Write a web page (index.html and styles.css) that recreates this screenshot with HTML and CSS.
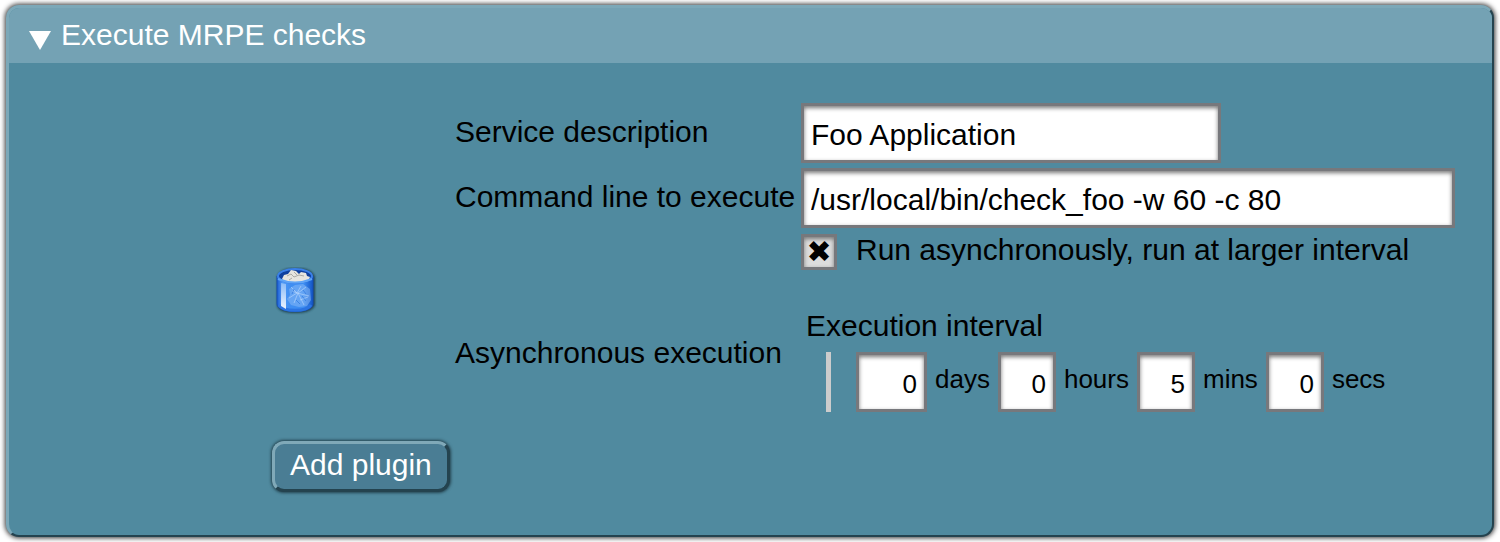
FILE: index.html
```html
<!DOCTYPE html>
<html lang="en">
<head>
<meta charset="utf-8">
<title>Execute MRPE checks</title>
<link rel="stylesheet" href="styles.css">
</head>
<body>
<form class="panel">
  <h2 class="panel-header">
    <svg class="caret" viewBox="0 0 22 19" aria-hidden="true"><path d="M0 0h22L11 19z" fill="#fff"/></svg>
    Execute MRPE checks
  </h2>
  <div class="panel-body">
    <div class="plugin">
      <button type="button" class="delete" aria-label="Delete plugin">
        <svg class="bin" viewBox="0 0 44 48" aria-hidden="true">
          <defs>
            <linearGradient id="side" x1="0" x2="1" y1="0" y2="0">
              <stop offset="0" stop-color="#1c5cd0"/>
              <stop offset=".15" stop-color="#4f9af5"/>
              <stop offset=".35" stop-color="#3f8ef2"/>
              <stop offset=".75" stop-color="#3d8df2"/>
              <stop offset="1" stop-color="#1253c4"/>
            </linearGradient>
            <linearGradient id="shine" x1="0" x2="0" y1="0" y2="1">
              <stop offset="0" stop-color="#fff" stop-opacity=".35"/>
              <stop offset="1" stop-color="#fff" stop-opacity=".9"/>
            </linearGradient>
            <filter id="shadow" x="-20%" y="-20%" width="140%" height="140%"><feGaussianBlur stdDeviation="1"/></filter>
            <filter id="soft" x="-20%" y="-20%" width="140%" height="140%"><feGaussianBlur stdDeviation=".6"/></filter>
          </defs>
          <path d="M3 10v28q1 8 18 8t20-8V10q-3-9-19-9T3 10z" fill="#16333f" opacity=".8" filter="url(#shadow)"/>
          <path d="M3 9v28c0 10 36 10 36 0V9z" fill="url(#side)" stroke="#1550b8"/>
          <path d="M5 38c4 7 28 7 32 0" fill="none" stroke="#2b74e2" stroke-width="3"/>
          <ellipse cx="21" cy="9" rx="17" ry="7" fill="#0e3f9e" stroke="#3a7fe8" stroke-width="2"/>
          <g filter="url(#soft)">
            <path d="M8 12l2-4 4-1 3-4 5 1 3 3 2-2 5 1 1 3 3 1-2 4q-12 4-24 0z" fill="#e6e4df"/>
            <path d="M13 9l4-2 3 3 5-2 5 1M20 5l3 3M15 13l3-2" fill="none" stroke="#aaa9a5"/>
          </g>
          <path d="M4 12q17 7 34 0" fill="none" stroke="#5ea4f6" stroke-width="2"/>
          <path d="M7 16l5 1v25l-5-3z" fill="url(#shine)" filter="url(#soft)"/>
          <g filter="url(#soft)">
            <path d="M15 22l6-4 8-1 7 5 1 11-4 6-8 1-8-2-4-6 3-4z" fill="#8cbcf5" opacity=".5"/>
            <path d="M17 20l6 6 4-7M15 31l8-5 12 3M24 26l-4 10M24 26l6 12M32 20l-8 6M26 33l8-3M18 24l5 2" fill="none" stroke="#c3deff" opacity=".55"/>
            <path d="M20 22l-2 5M29 23l3 4M22 33l4 4M28 29l4 5" fill="none" stroke="#2670d8" opacity=".6"/>
          </g>
        </svg>
      </button>
      <div class="fields">
        <label for="service">Service description</label>
        <input class="text service" id="service" type="text" value="Foo Application">
        <label for="command">Command line to execute</label>
        <input class="text command" id="command" type="text" value="/usr/local/bin/check_foo -w 60 -c 80">
        <span class="async-label">Asynchronous execution</span>
        <div class="async">
          <label class="toggle"><input class="check" type="checkbox" checked><span>Run asynchronously, run at larger interval</span></label>
          <div class="interval-title">Execution interval</div>
          <div class="interval">
            <input class="text number days" id="days" type="text" value="0"><label for="days">days</label>
            <input class="text number" id="hours" type="text" value="0"><label for="hours">hours</label>
            <input class="text number" id="mins" type="text" value="5"><label for="mins">mins</label>
            <input class="text number" id="secs" type="text" value="0"><label for="secs">secs</label>
          </div>
        </div>
      </div>
    </div>
    <button type="button" class="add">Add plugin</button>
  </div>
</form>
</body>
</html>
```
FILE: styles.css
```css
* { box-sizing: border-box; }

body {
  margin: 0;
  padding: 5px 6px;
  background: #fff;
  color: #000;
  font: 30px/34px "Liberation Sans", Arial, sans-serif;
}

input, button { font: inherit; }

.panel {
  overflow: hidden;
  border: solid;
  border-width: 3px 2px 2px 3px;
  border-color: #7ca8b8 #24434f #24434f #7ca8b8;
  border-radius: 13px;
  background: #508a9f;
  box-shadow: 0 0 5px 1px #333;
}

.panel-header {
  display: flex;
  align-items: center;
  gap: 10px;
  margin: 0;
  padding: 10px 20px 11px;
  background: #74a2b4;
  color: #fff;
  font-size: 30px;
  font-weight: normal;
}

.caret {
  width: 22px;
  height: 19px;
  margin-top: 10px;
}

.panel-body { padding: 40px 36px 43px 263px; }

.plugin {
  display: flex;
  align-items: center;
}

.delete {
  flex: none;
  width: 183px;
  margin-top: 66px;
  padding: 0 2px;
  border: 0;
  background: none;
  text-align: left;
}

.bin {
  display: block;
  width: 44px;
  height: 48px;
}

.fields {
  flex: 1;
  display: grid;
  grid-template-columns: 346px 1fr;
  row-gap: 5px;
  align-items: center;
}

.fields > label { padding-bottom: 2px; }

.text {
  min-width: 0;
  height: 60px;
  padding: 4px 7px 0;
  border: 3px solid #77787c;
  border-radius: 0;
  background: #fff;
  color: #000;
  box-shadow: inset 0 2px 4px #777;
}

.service { width: 420px; }
.command { width: 654px; }
.async-label { padding-top: 60px; }

.toggle {
  display: flex;
  align-items: center;
  gap: 19px;
}

.toggle span { padding-bottom: 4px; }

.check {
  appearance: none;
  display: grid;
  place-items: center;
  width: 36px;
  height: 36px;
  margin: 0;
  border: 3px solid #77787c;
  background: #ddd;
  box-shadow: inset 0 2px 4px #777;
}

.check:checked::before {
  content: "✖";
  font: 30px/30px "DejaVu Sans", sans-serif;
}

.interval-title { padding: 38px 0 9px 5px; }

.interval {
  display: flex;
  align-items: center;
  gap: 8px;
  margin-left: 25px;
  padding-left: 25px;
  border-left: 5px solid #ccc;
  font-size: 26px;
}

.interval label { padding-bottom: 6px; }

.number {
  width: 58px;
  padding: 4px 7px 0;
  text-align: right;
}

.days { width: 71px; }

.add {
  margin-top: 29px;
  height: 51px;
  padding: 0 15px 3px;
  border: 3px solid;
  border-color: #80a9b8 #24434f #24434f #80a9b8;
  border-radius: 12px;
  background: #4a7d94;
  box-shadow: 0 0 3px 1px #24434f;
  color: #fff;
}
```
